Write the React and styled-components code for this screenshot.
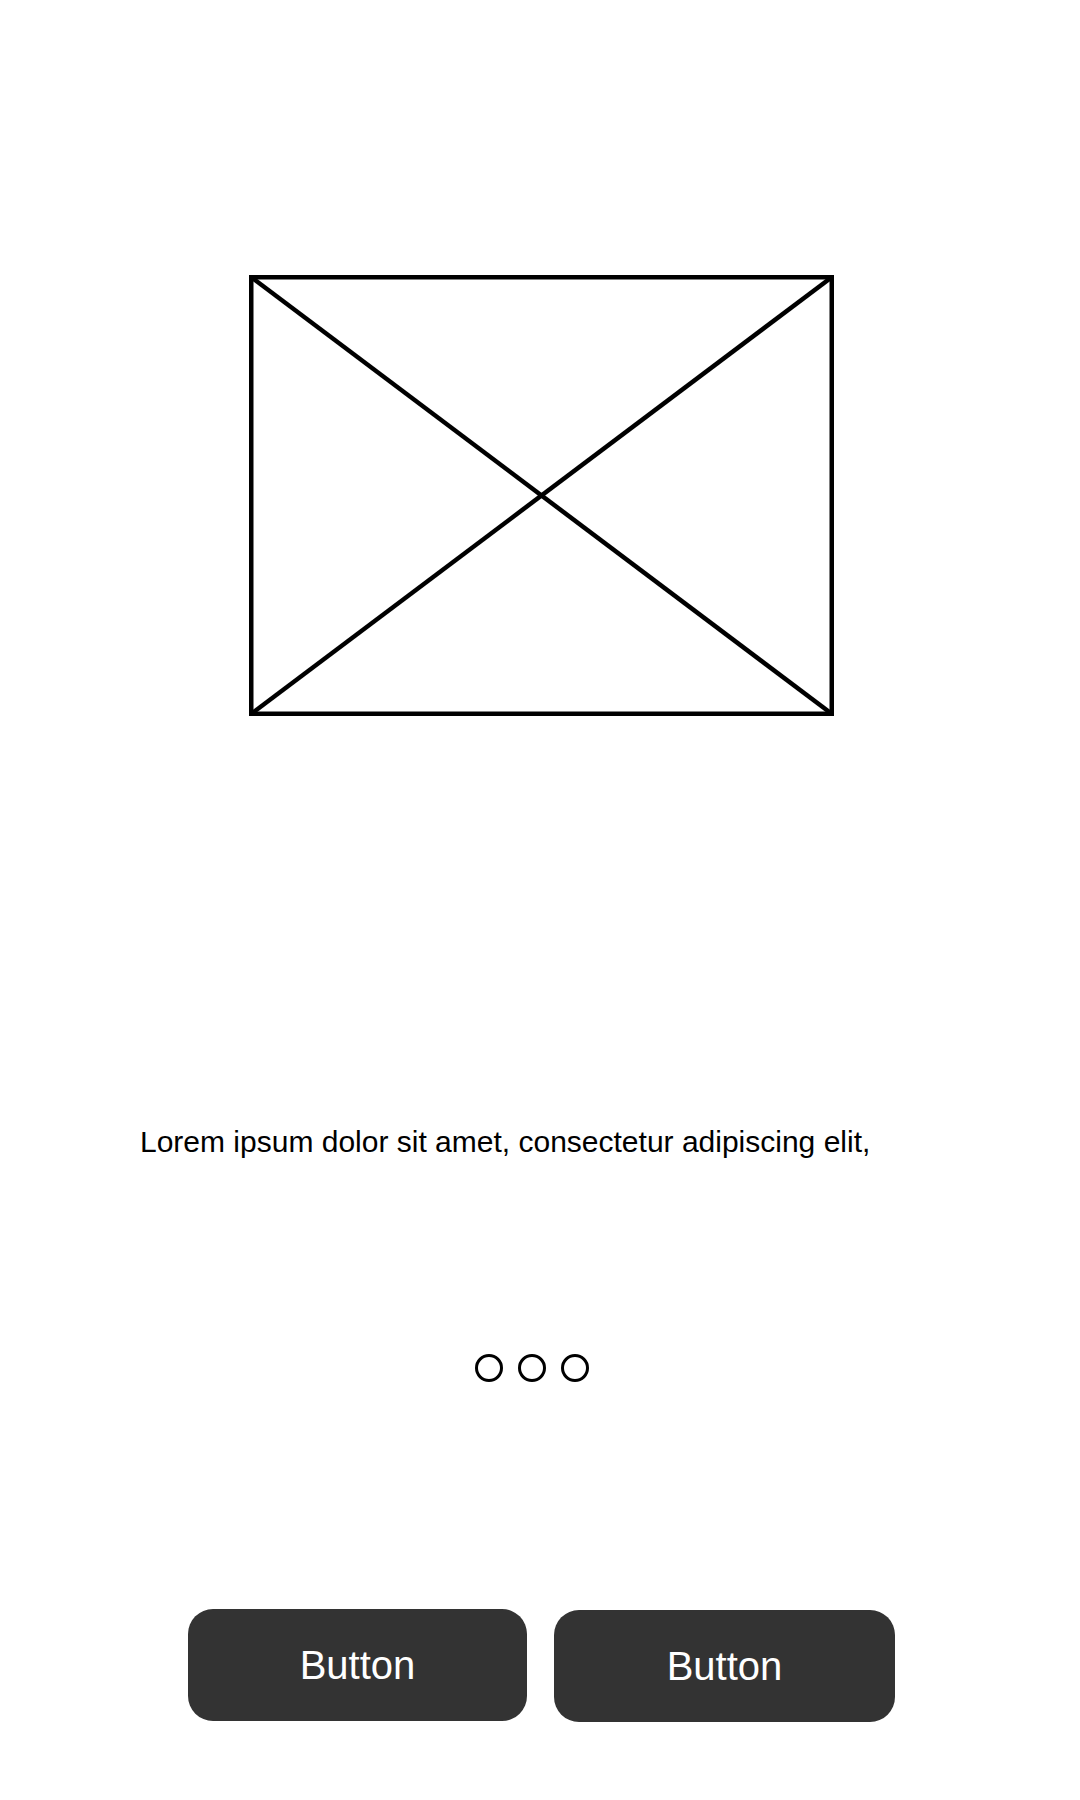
import React from "react";
import styled, { createGlobalStyle } from "styled-components";

const Global = createGlobalStyle`
  html, body { margin: 0; padding: 0; background: #ffffff; }
  body { font-family: "Liberation Sans", Arial, sans-serif; }
`;

const Page = styled.div`
  width: 1080px;
  min-height: 1800px;
  display: flex;
  flex-direction: column;
  padding-top: 275px;
  box-sizing: border-box;
  background: #ffffff;
`;

const Placeholder = styled.svg`
  display: block;
  margin-left: 249px;
  width: 585px;
  height: 441px;
`;

const Caption = styled.p`
  margin: 409px 0 0 140px;
  font-size: 30px;
  line-height: 34px;
  color: #000000;
`;

const Dots = styled.div`
  display: flex;
  gap: 15px;
  margin: 195px 0 0 475px;
`;

const Dot = styled.span`
  width: 28px;
  height: 28px;
  box-sizing: border-box;
  border: 3px solid #000000;
  border-radius: 50%;
  background: ${(p) => (p.$active ? "#000" : "transparent")};
`;

const Actions = styled.div`
  display: flex;
  gap: 27px;
  margin: 227px 0 0 188px;
`;

const Button = styled.button`
  width: ${(p) => p.$w}px;
  height: 112px;
  margin-top: ${(p) => p.$offset || 0}px;
  border: none;
  border-radius: 25px;
  background: #333333;
  color: #ffffff;
  font-family: "Liberation Sans", Arial, sans-serif;
  font-size: 40px;
  display: flex;
  align-items: center;
  justify-content: center;
  padding: 0;
  cursor: pointer;
`;

export default function App() {
  const w = 585;
  const h = 441;
  return (
    <>
      <Global />
      <Page>
        <Placeholder viewBox={`0 0 ${w} ${h}`}>
          <rect x="2.25" y="2.25" width={w - 4.5} height={h - 4.5} fill="none" stroke="#000" strokeWidth="4.5" />
          <line x1="2" y1="2" x2={w - 2} y2={h - 2} stroke="#000" strokeWidth="4.5" />
          <line x1={w - 2} y1="2" x2="2" y2={h - 2} stroke="#000" strokeWidth="4.5" />
        </Placeholder>
        <Caption>Lorem ipsum dolor sit amet, consectetur adipiscing elit,</Caption>
        <Dots>
          <Dot />
          <Dot />
          <Dot />
        </Dots>
        <Actions>
          <Button $w={339}>Button</Button>
          <Button $w={341} $offset={1}>Button</Button>
        </Actions>
      </Page>
    </>
  );
}
